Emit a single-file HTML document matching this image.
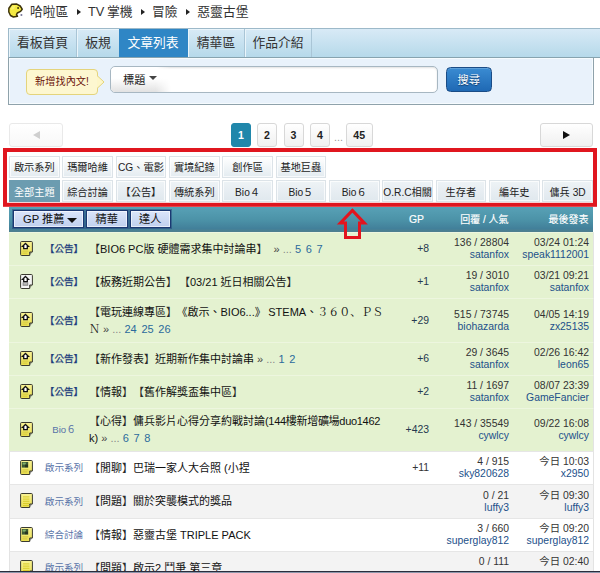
<!DOCTYPE html>
<html lang="zh-Hant">
<head>
<meta charset="utf-8">
<title>惡靈古堡 哈啦板</title>
<style>
html,body{margin:0;padding:0;}
body{width:600px;height:573px;overflow:hidden;background:#fff;position:relative;
 font-family:"Liberation Sans","Noto Sans CJK TC",sans-serif;color:#222;}
.a{position:absolute;white-space:nowrap;}
/* breadcrumb */
.bc{top:3px;left:30px;font-size:12.8px;line-height:18px;color:#333;word-spacing:-1px;}
.bc i{font-style:normal;display:inline-block;width:0;height:0;border-left:4.5px solid #222;border-top:3.8px solid transparent;border-bottom:3.8px solid transparent;margin:0 6.9px 0 8.7px;vertical-align:1px;}
/* tabs */
.tabs{left:8px;top:28px;width:600px;height:28px;border:1px solid #9db9c9;border-right:0;border-bottom-color:#87a3af;
 background:linear-gradient(#d8eaf6,#b6d9ea);box-sizing:content-box;}
.tab{position:absolute;top:0;height:28px;line-height:28px;text-align:center;font-size:12.8px;color:#333;
 border-right:1px solid #a9c5d6;box-shadow:inset 1px 1px 0 #eaf5fb;}
.tab.on{background:#2f86c5;color:#fff;box-shadow:none;border-right-color:#2f86c5;}
/* search panel */
.sp{left:8px;top:58px;width:584px;height:46px;border:1px solid #8fa2ab;border-top:0;background:#e9f2fb;box-shadow:inset 1px 1px 0 #f6fbfe,inset -1px -1px 0 #f6fbfe;}
.bub{left:26px;top:69px;width:70px;height:23.5px;background:#fdf7d0;border:1px solid #e4d47c;border-radius:4px;
 font-size:10.2px;line-height:24px;text-align:center;color:#6a1208;}
.sel{left:110px;top:66px;width:326px;height:24.5px;border:1px solid #a7b7c2;border-radius:5px;background:#fff;
 box-shadow:inset 0 1px 2px rgba(0,0,0,.12);}
.btn{left:445.5px;top:66.5px;width:44.5px;height:23.5px;border:1px solid #1a4c86;border-radius:4.5px;
 background:linear-gradient(#3a8bd2,#1f69b4);color:#fff;font-size:11.2px;line-height:24.5px;text-align:center;text-shadow:0 1px 1px rgba(0,30,70,.7);box-shadow:inset 0 1px 0 rgba(255,255,255,.18);}
/* pager */
.pg{top:122.5px;height:22.5px;border:1px solid #d8d8d8;border-radius:3px;background:linear-gradient(#fff,#f0f0f0);
 font-size:10.6px;line-height:23px;text-align:center;color:#222;font-weight:bold;}
.pg.on{background:#2087ab;border-color:#2087ab;color:#fff;}
/* sub boards */
.sb{height:20px;width:48.5px;line-height:22.5px;font-size:10.2px;text-align:center;color:#222;
 border:1px solid #dce3e8;background:linear-gradient(#ffffff,#e3ebf0);box-sizing:content-box;box-shadow:inset 0 0 0 1px rgba(255,255,255,.7);}
.sb.r2{background:linear-gradient(#eef3f6,#e0e8ee);line-height:23px;}
.sb.on{background:#6c9cb0;border-color:#6c9cb0;color:#fff;box-shadow:none;}
/* list header */
.lh{left:9px;top:207px;width:584px;height:24.5px;background:linear-gradient(#58a1b6 0,#4c93a8 50%,#42809a 86%,#507f8d 100%);}
.hb{top:209.5px;height:16px;border:1px solid #1b3872;outline:.5px solid rgba(27,56,114,.45);background:linear-gradient(#dbe5fa,#c0d0ee);
 font-size:11.2px;line-height:16.5px;text-align:center;color:#111;box-shadow:inset 0 0 0 1px rgba(255,255,255,.6);}
.ht{top:207.5px;height:24px;line-height:23.5px;font-size:10px;color:#fff;-webkit-text-stroke:.15px #fff;}
/* rows */
.row{left:9px;width:585px;display:flex;align-items:center;box-sizing:border-box;border-top:1px solid rgba(255,255,255,.33);border-right:1px solid #e3e3e3;}
.g{background:#e4f2d0;}
.w{background:#fff;border-top-color:#e6e6e6;border-left:1px solid #e3e3e3;}
.s{background:#f3f3f3;border-top-color:#e6e6e6;border-left:1px solid #e3e3e3;}
.w .ci,.s .ci{margin-left:-1px;}
.ci{width:29px;flex:none;height:15px;}
.ic{display:block;margin-left:11px;position:relative;top:-1px;}
.cl{width:52px;flex:none;text-align:center;font-size:9.6px;line-height:14px;color:#1d3c7c;}
.cl{-webkit-text-stroke:.25px #1d3c7c;}
.cl.n{color:#5873a8;-webkit-text-stroke:0;}
.ct{width:297px;margin-left:-1px;flex:none;font-size:11px;line-height:17px;color:#111;}
.ct b{font-weight:normal;color:#2b6a9c;}
.ct s{text-decoration:none;font-weight:300;color:#2a2a2a;}
.ct b{word-spacing:1.6px;}
.ct em{font-style:normal;color:#444;}
.ct q{quotes:none;color:#888;}
.ct .pl{margin-left:6px;}
.sp2{display:inline-block;width:0;margin-left:-2px;}
.ct .tight{letter-spacing:-.3px;}
.cg{width:43px;flex:none;text-align:right;font-size:10.4px;line-height:14px;color:#25384f;}
.cc{width:80px;flex:none;font-size:10.4px;line-height:11.6px;text-align:right;color:#333;}
.cc u{text-decoration:none;color:#22508a;}
.last u{visibility:hidden;}
.fw{font-family:"Liberation Serif","Noto Serif CJK SC",serif;}
</style>
</head>
<body>
<svg width="0" height="0" style="position:absolute"><defs><linearGradient id="gy" x1="0" y1="0" x2="0" y2="1"><stop offset="0" stop-color="#f8f296"/><stop offset="1" stop-color="#eadf4e"/></linearGradient></defs></svg>

<!-- breadcrumb -->
<svg class="a" style="left:6px;top:1px" width="20" height="20" viewBox="6 1 20 20">
 <path d="M11.8 4.3 L16.8 4.1 L20.2 6 L22.2 9.2 L20.6 11.4 L17.3 13 L16.5 14.6 L17.5 16.3 L13.4 17 L10.5 15.5 L8.8 12 L8.9 8.3 Z" fill="#f4ea42" stroke="#3c3208" stroke-width="1.5" stroke-linejoin="round"/>
 <path d="M11.5 6.5 L15.5 5.6 L14 9 L11 10Z" fill="#faf37a" opacity=".8"/>
 <circle cx="18.1" cy="8" r="0.95" fill="#3c3208"/>
 <circle cx="21.4" cy="15" r="1.05" fill="#77779a"/>
</svg>
<div class="a bc">哈啦區<i></i>TV 掌機<i></i>冒險<i></i>惡靈古堡</div>

<!-- tabs -->
<div class="a tabs">
 <div class="tab" style="left:0;width:67px">看板首頁</div>
 <div class="tab" style="left:68px;width:42px">板規</div>
 <div class="tab on" style="left:110px;width:68px">文章列表</div>
 <div class="tab" style="left:179px;width:56px">精華區</div>
 <div class="tab" style="left:236px;width:66px">作品介紹</div>
</div>

<!-- search panel -->
<div class="a sp"></div>
<div class="a bub">新增找內文!</div>
<svg class="a" style="left:96.5px;top:74.8px" width="9" height="14" viewBox="0 0 9 14"><path d="M0 0.5 L7 7 L0 13.5" fill="#fdf6c9" stroke="#e4d47c" stroke-width="1"/></svg>
<div class="a sel"></div>
<div class="a" style="left:111px;top:67px;width:60px;height:24.5px;border-radius:4px 0 0 4px;background:linear-gradient(#fff 45%,#e2e2e2);-webkit-mask-image:linear-gradient(to right,#000 75%,transparent);mask-image:linear-gradient(to right,#000 75%,transparent)"></div>
<div class="a" style="left:123px;top:71px;font-size:11.2px;line-height:18px;color:#222">標題</div>
<div class="a" style="left:149px;top:76px;width:0;height:0;border-top:4.5px solid #444;border-left:4.5px solid transparent;border-right:4.5px solid transparent"></div>
<div class="a btn">搜尋</div>

<!-- pager -->
<div class="a pg" style="left:8.5px;width:52px;border-color:#e9e9e9;background:linear-gradient(#fff,#f8f8f8)"></div>
<div class="a" style="left:32.5px;top:130.5px;width:0;height:0;border-right:7px solid #cfcfcf;border-top:4px solid transparent;border-bottom:4px solid transparent"></div>
<div class="a pg on" style="left:231px;width:18px">1</div>
<div class="a pg" style="left:257px;width:18px">2</div>
<div class="a pg" style="left:283.5px;width:18px">3</div>
<div class="a pg" style="left:310px;width:18px">4</div>
<div class="a" style="left:334px;top:128px;font-size:10.8px;line-height:18px;color:#999">...</div>
<div class="a pg" style="left:345.5px;width:25.5px">45</div>
<div class="a pg" style="left:540px;width:51px"></div>
<div class="a" style="left:563px;top:130.5px;width:0;height:0;border-left:7.5px solid #111;border-top:4px solid transparent;border-bottom:4px solid transparent"></div>

<!-- sub boards -->
<div class="a sb r1" style="left:9.0px;top:156px">啟示系列</div>
<div class="a sb r1" style="left:62.3px;top:156px">瑪爾哈維</div>
<div class="a sb r1" style="left:115.7px;top:156px">CG、電影</div>
<div class="a sb r1" style="left:169.0px;top:156px">實境紀錄</div>
<div class="a sb r1" style="left:222.3px;top:156px">創作區</div>
<div class="a sb r1" style="left:275.6px;top:156px">基地巨蟲</div>
<div class="a sb r2 on" style="left:9.0px;top:180px">全部主題</div>
<div class="a sb r2" style="left:62.3px;top:180px">綜合討論</div>
<div class="a sb r2" style="left:115.7px;top:180px">【公告】</div>
<div class="a sb r2" style="left:169.0px;top:180px">傳統系列</div>
<div class="a sb r2" style="left:222.3px;top:180px">Bio４</div>
<div class="a sb r2" style="left:275.6px;top:180px">Bio５</div>
<div class="a sb r2" style="left:329.0px;top:180px">Bio６</div>
<div class="a sb r2" style="left:382.3px;top:180px">O.R.C相關</div>
<div class="a sb r2" style="left:435.6px;top:180px">生存者</div>
<div class="a sb r2" style="left:489.0px;top:180px">編年史</div>
<div class="a sb r2" style="left:542.3px;top:180px">傭兵 3D</div>

<svg class="a" style="left:0;top:140px" width="600" height="75" viewBox="0 140 600 75"><rect x="5" y="150" width="590" height="54.8" fill="none" stroke="#e0161f" stroke-width="4"/></svg>

<!-- list header -->
<div class="a lh"></div>
<div class="a hb" style="left:13px;width:68.5px"><span style="margin-left:-9px">GP 推薦</span></div>
<div class="a" style="left:66.5px;top:217.5px;width:0;height:0;border-top:5.5px solid #111;border-left:5.2px solid transparent;border-right:5.2px solid transparent"></div>
<div class="a hb" style="left:86px;width:39.5px">精華</div>
<div class="a hb" style="left:129.5px;width:39.5px">達人</div>
<div class="a ht" style="left:409px;font-size:10.4px">GP</div>
<div class="a ht" style="left:408.5px;width:100px;text-align:right">回覆 / 人氣</div>
<div class="a ht" style="left:488.5px;width:100px;text-align:right">最後發表</div>

<!-- rows -->
<div class="a row g" style="top:232px;height:33px"><div class="ci"><svg class="ic" width="13" height="15" viewBox="0 0 13 15"><path d="M1.6 .5H11.4a1 1 0 0 1 1 1V11H9.7V14.5H1.6a1 1 0 0 1-1-1V1.5a1 1 0 0 1 1-1Z" fill="url(#gy)" stroke="#3a3a30" stroke-width="1"/><path d="M9.7 11V14.5L12.4 11Z" fill="#3a3a30" opacity=".5"/><rect x="2.4" y="9.6" width="6" height="1" fill="#d2c63a"/><rect x="2.4" y="11.6" width="5" height="1" fill="#d2c63a"/><path d="M5.5 2.5L8.4 5.3H7.3V7.7H3.7V5.3H2.6Z" fill="#fff" stroke="#111" stroke-width="1.3" stroke-linejoin="miter"/></svg></div><div class="cl ">【公告】</div><div class="ct"><s>【</s>BIO6 PC版 硬體需求集中討論串<s>】</s><em class="pl">» <q>...</q></em> <b>5 6 7</b></div><div class="cg">+8</div><div class="cc">136 / 28804<br><u>satanfox</u></div><div class="cc">03/24 01:24<br><u>speak1112001</u></div></div>
<div class="a row g" style="top:265px;height:33px"><div class="ci"><svg class="ic" width="13" height="15" viewBox="0 0 13 15"><path d="M1.6 .5H11.4a1 1 0 0 1 1 1V11H9.7V14.5H1.6a1 1 0 0 1-1-1V1.5a1 1 0 0 1 1-1Z" fill="#f4f4f4" stroke="#3a3a30" stroke-width="1"/><path d="M9.7 11V14.5L12.4 11Z" fill="#3a3a30" opacity=".5"/><rect x="2.6" y="8.4" width="5.6" height="3.4" fill="#8a8a8a"/><rect x="3.6" y="9.4" width="3.6" height="1" fill="#ddd"/><path d="M5.5 2.5L8.4 5.3H7.3V7.7H3.7V5.3H2.6Z" fill="#fff" stroke="#111" stroke-width="1.3" stroke-linejoin="miter"/></svg></div><div class="cl ">【公告】</div><div class="ct"><s>【</s>板務近期公告<s>】</s><i class="sp2" style="margin-left:2px"></i><s>【</s>03/21 近日相關公告<s>】</s></div><div class="cg">+1</div><div class="cc">19 / 3010<br><u>satanfox</u></div><div class="cc">03/21 09:21<br><u>satanfox</u></div></div>
<div class="a row g" style="top:298px;height:44px"><div class="ci"><svg class="ic" width="13" height="15" viewBox="0 0 13 15"><path d="M1.6 .5H11.4a1 1 0 0 1 1 1V11H9.7V14.5H1.6a1 1 0 0 1-1-1V1.5a1 1 0 0 1 1-1Z" fill="url(#gy)" stroke="#3a3a30" stroke-width="1"/><path d="M9.7 11V14.5L12.4 11Z" fill="#3a3a30" opacity=".5"/><rect x="2.4" y="9.6" width="6" height="1" fill="#d2c63a"/><rect x="2.4" y="11.6" width="5" height="1" fill="#d2c63a"/><path d="M5.5 2.5L8.4 5.3H7.3V7.7H3.7V5.3H2.6Z" fill="#fff" stroke="#111" stroke-width="1.3" stroke-linejoin="miter"/></svg></div><div class="cl ">【公告】</div><div class="ct"><s>【</s>電玩連線專區<s>】</s><i class="sp2" style="margin-left:-.5px"></i>《啟示、BIO6...》<i class="sp2" style="margin-left:2.5px"></i>STEMA、<span class="fw">３６０、ＰＳ</span><br><span class="fw">Ｎ</span> <em>» <q>...</q></em> <b>24 25 26</b></div><div class="cg">+29</div><div class="cc">515 / 73745<br><u>biohazarda</u></div><div class="cc">04/05 14:19<br><u>zx25135</u></div></div>
<div class="a row g" style="top:342px;height:33px"><div class="ci"><svg class="ic" width="13" height="15" viewBox="0 0 13 15"><path d="M1.6 .5H11.4a1 1 0 0 1 1 1V11H9.7V14.5H1.6a1 1 0 0 1-1-1V1.5a1 1 0 0 1 1-1Z" fill="url(#gy)" stroke="#3a3a30" stroke-width="1"/><path d="M9.7 11V14.5L12.4 11Z" fill="#3a3a30" opacity=".5"/><rect x="2.4" y="9.6" width="6" height="1" fill="#d2c63a"/><rect x="2.4" y="11.6" width="5" height="1" fill="#d2c63a"/><path d="M5.5 2.5L8.4 5.3H7.3V7.7H3.7V5.3H2.6Z" fill="#fff" stroke="#111" stroke-width="1.3" stroke-linejoin="miter"/></svg></div><div class="cl ">【公告】</div><div class="ct"><s>【</s>新作發表<s>】</s>近期新作集中討論串 <em>» <q>...</q></em> <b>1 2</b></div><div class="cg">+6</div><div class="cc">29 / 3645<br><u>satanfox</u></div><div class="cc">02/26 16:42<br><u>leon65</u></div></div>
<div class="a row g" style="top:375px;height:33px"><div class="ci"><svg class="ic" width="13" height="15" viewBox="0 0 13 15"><path d="M1.6 .5H11.4a1 1 0 0 1 1 1V11H9.7V14.5H1.6a1 1 0 0 1-1-1V1.5a1 1 0 0 1 1-1Z" fill="url(#gy)" stroke="#3a3a30" stroke-width="1"/><path d="M9.7 11V14.5L12.4 11Z" fill="#3a3a30" opacity=".5"/><rect x="2.4" y="9.6" width="6" height="1" fill="#d2c63a"/><rect x="2.4" y="11.6" width="5" height="1" fill="#d2c63a"/><path d="M5.5 2.5L8.4 5.3H7.3V7.7H3.7V5.3H2.6Z" fill="#fff" stroke="#111" stroke-width="1.3" stroke-linejoin="miter"/></svg></div><div class="cl ">【公告】</div><div class="ct"><s>【</s>情報<s>】</s><i class="sp2" style="margin-left:0"></i><s>【</s>舊作解獎盃集中區<s>】</s></div><div class="cg">+2</div><div class="cc">11 / 1697<br><u>satanfox</u></div><div class="cc">08/07 23:39<br><u>GameFancier</u></div></div>
<div class="a row g" style="top:408px;height:43px"><div class="ci"><svg class="ic" width="13" height="15" viewBox="0 0 13 15"><path d="M1.6 .5H11.4a1 1 0 0 1 1 1V11H9.7V14.5H1.6a1 1 0 0 1-1-1V1.5a1 1 0 0 1 1-1Z" fill="url(#gy)" stroke="#3a3a30" stroke-width="1"/><path d="M9.7 11V14.5L12.4 11Z" fill="#3a3a30" opacity=".5"/><rect x="2.4" y="9.6" width="6" height="1" fill="#d2c63a"/><rect x="2.4" y="11.6" width="5" height="1" fill="#d2c63a"/><path d="M5.5 2.5L8.4 5.3H7.3V7.7H3.7V5.3H2.6Z" fill="#fff" stroke="#111" stroke-width="1.3" stroke-linejoin="miter"/></svg></div><div class="cl n">Bio６</div><div class="ct"><s>【</s>心得<s>】</s>傭兵影片心得分享約戰討論<span class="tight">(144樓新增礦場duo1462</span><br>k) <em>» <q>...</q></em> <b>6 7 8</b></div><div class="cg">+423</div><div class="cc">143 / 35549<br><u>cywlcy</u></div><div class="cc">09/22 16:08<br><u>cywlcy</u></div></div>
<div class="a row w" style="top:451px;height:33px"><div class="ci"><svg class="ic" width="13" height="15" viewBox="0 0 13 15"><path d="M1.6 .5H11.4a1 1 0 0 1 1 1V11H9.7V14.5H1.6a1 1 0 0 1-1-1V1.5a1 1 0 0 1 1-1Z" fill="url(#gy)" stroke="#3a3a30" stroke-width="1"/><path d="M9.7 11V14.5L12.4 11Z" fill="#3a3a30" opacity=".5"/><rect x="1.8" y="2" width="6.4" height="5.6" fill="#3d5a34"/><rect x="2.6" y="2.6" width="3.2" height="2" fill="#7fae6a"/><rect x="5" y="4.6" width="3" height="2.6" fill="#27341f"/><rect x="2.4" y="9.4" width="6" height="1" fill="#cfc23a"/><rect x="2.4" y="11.4" width="5" height="1" fill="#cfc23a"/></svg></div><div class="cl n">啟示系列</div><div class="ct"><s>【</s>閒聊<s>】</s>巴瑞一家人大合照 (小捏</div><div class="cg"><span style="color:#333">+11</span></div><div class="cc">4 / 915<br><u>sky820628</u></div><div class="cc">今日 10:03<br><u>x2950</u></div></div>
<div class="a row s" style="top:484px;height:34px"><div class="ci"><svg class="ic" width="13" height="15" viewBox="0 0 13 15"><path d="M1.6 .5H11.4a1 1 0 0 1 1 1V11H9.7V14.5H1.6a1 1 0 0 1-1-1V1.5a1 1 0 0 1 1-1Z" fill="url(#gy)" stroke="#3a3a30" stroke-width="1"/><path d="M9.7 11V14.5L12.4 11Z" fill="#3a3a30" opacity=".5"/><rect x="3" y="3.4" width="6.4" height="1" fill="#d9cc2c"/><rect x="3" y="5.6" width="6.4" height="1" fill="#d9cc2c"/><rect x="3" y="7.8" width="6.4" height="1" fill="#d9cc2c"/><rect x="3" y="10" width="6.4" height="1" fill="#d9cc2c"/><rect x="3" y="12" width="6.4" height="1" fill="#d9cc2c"/></svg></div><div class="cl n">啟示系列</div><div class="ct"><s>【</s>問題<s>】</s>關於突襲模式的獎品</div><div class="cg"></div><div class="cc">0 / 21<br><u>luffy3</u></div><div class="cc">今日 09:30<br><u>luffy3</u></div></div>
<div class="a row w" style="top:518px;height:33px"><div class="ci"><svg class="ic" width="13" height="15" viewBox="0 0 13 15"><path d="M1.6 .5H11.4a1 1 0 0 1 1 1V11H9.7V14.5H1.6a1 1 0 0 1-1-1V1.5a1 1 0 0 1 1-1Z" fill="url(#gy)" stroke="#3a3a30" stroke-width="1"/><path d="M9.7 11V14.5L12.4 11Z" fill="#3a3a30" opacity=".5"/><rect x="1.8" y="2" width="6.4" height="5.6" fill="#3d5a34"/><rect x="2.6" y="2.6" width="3.2" height="2" fill="#7fae6a"/><rect x="5" y="4.6" width="3" height="2.6" fill="#27341f"/><rect x="2.4" y="9.4" width="6" height="1" fill="#cfc23a"/><rect x="2.4" y="11.4" width="5" height="1" fill="#cfc23a"/></svg></div><div class="cl n">綜合討論</div><div class="ct"><s>【</s>情報<s>】</s>惡靈古堡 TRIPLE PACK</div><div class="cg"></div><div class="cc">3 / 660<br><u>superglay812</u></div><div class="cc">今日 09:20<br><u>superglay812</u></div></div>
<div class="a row s last" style="top:551px;height:33px"><div class="ci"><svg class="ic" width="13" height="15" viewBox="0 0 13 15"><path d="M1.6 .5H11.4a1 1 0 0 1 1 1V11H9.7V14.5H1.6a1 1 0 0 1-1-1V1.5a1 1 0 0 1 1-1Z" fill="url(#gy)" stroke="#3a3a30" stroke-width="1"/><path d="M9.7 11V14.5L12.4 11Z" fill="#3a3a30" opacity=".5"/><rect x="3" y="3.4" width="6.4" height="1" fill="#d9cc2c"/><rect x="3" y="5.6" width="6.4" height="1" fill="#d9cc2c"/><rect x="3" y="7.8" width="6.4" height="1" fill="#d9cc2c"/><rect x="3" y="10" width="6.4" height="1" fill="#d9cc2c"/><rect x="3" y="12" width="6.4" height="1" fill="#d9cc2c"/></svg></div><div class="cl n">啟示系列</div><div class="ct"><s>【</s>問題<s>】</s>啟示2 鬥爭 第三章</div><div class="cg"></div><div class="cc">0 / 111<br><u>kevin8012</u></div><div class="cc">今日 02:40<br><u>kevin8012</u></div></div>

<!-- red arrow -->
<svg class="a" style="left:330px;top:203px" width="44" height="40" viewBox="330 203 44 40">
 <path d="M352.35 210.4 L364.4 223.1 H359.5 V237.5 H345.5 V223.1 H340.3 Z" fill="none" stroke="#e3141e" stroke-width="3" stroke-linejoin="miter"/>
</svg>

<!-- bottom edge -->
<div class="a" style="left:0;top:571px;width:600px;height:1px;background:#2a2d3c"></div>
<div class="a" style="left:0;top:572px;width:600px;height:1px;background:#8c96aa"></div>

</body>
</html>
